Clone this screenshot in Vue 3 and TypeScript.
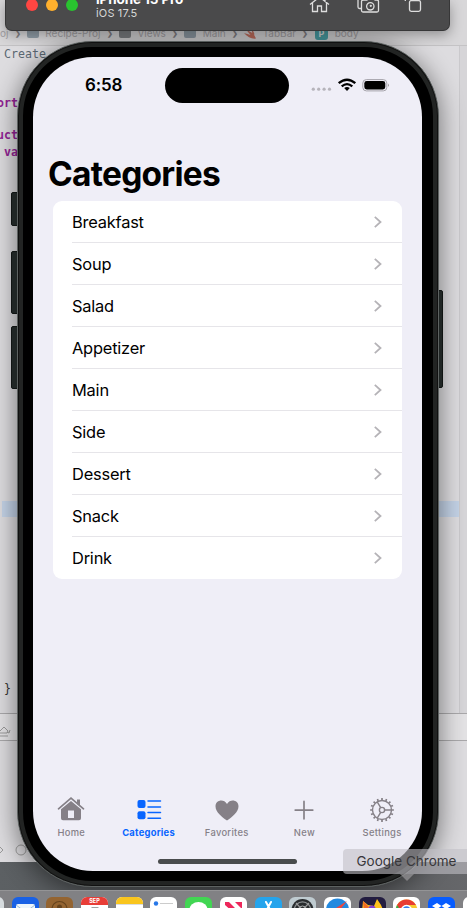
<script setup lang="ts">
const categories: string[] = ['Breakfast', 'Soup', 'Salad', 'Appetizer', 'Main', 'Side', 'Dessert', 'Snack', 'Drink']

interface Tab { label: string; icon: string; active?: boolean }
const tabs: Tab[] = [
  { label: 'Home', icon: 'home' },
  { label: 'Categories', icon: 'categories', active: true },
  { label: 'Favorites', icon: 'heart' },
  { label: 'New', icon: 'plus' },
  { label: 'Settings', icon: 'gear' },
]
const dock: string[] = ['finder', 'mail', 'contacts', 'calendar', 'notes', 'reminders', 'messages', 'news', 'appstore', 'settings', 'safari', 'firefox', 'chrome', 'dropbox', 'slack']
const teeth: number[] = Array.from({ length: 16 }, (_, i) => i * 22.5)
</script>

<template>
  <main class="desktop">
    <section class="editor">
      <div class="crumbs">
        <span>oj</span><b>❯</b><i class="folder"></i><span>Recipe-Proj</span><b>❯</b><i class="folder dark"></i><span>Views</span><b>❯</b><i class="folder"></i><span>Main</span><b>❯</b>
        <svg class="swift" width="12" height="11" viewBox="0 0 13 11"><path d="M0 5l7 2L2 1l7 4-1-4q4 3 3 6l2 4q-7 1-13-6z" fill="#c4705f" /></svg>
        <span>TabBar</span><b>❯</b><em>P</em><span>body</span>
      </div>
      <div class="code">
        <span class="comment">Create</span>
        <span class="kw port">ort</span>
        <span class="kw struct">uct</span>
        <span class="kw var">va</span>
        <span class="brace">}</span>
      </div>
      <div class="line-highlight"></div>
      <div class="debug-bar">
        <svg width="12" height="12" viewBox="0 0 12 12" fill="none" stroke="#999" stroke-width="1"><path d="M0 5l4-4 4 4-1 2H0M0 10h8M7 6l2 1 1-3" /></svg>
      </div>
      <div class="scroll-gutter"></div>
      <svg class="bottom-icons" width="30" height="16" viewBox="0 0 30 16" fill="none" stroke="#999"><path d="M0 5l3 3-3 3" /><circle cx="21" cy="8" r="5" /></svg>
    </section>
    <div class="desk-strip"></div>

    <section class="phone">
      <i class="side action"></i><i class="side up"></i><i class="side down"></i><i class="side power"></i>
      <div class="bezel">
        <div class="screen">
          <div class="status">
            <time>6:58</time>
            <div class="island"></div>
            <svg class="indicators" width="80" height="16" viewBox="0 0 80 16">
              <g fill="#b6b4bb"><circle cx="3.3" cy="11.2" r="1.6" /><circle cx="8.7" cy="11.2" r="1.6" /><circle cx="14.1" cy="11.2" r="1.6" /><circle cx="19.5" cy="11.2" r="1.6" /></g>
              <g fill="none" stroke="#000" stroke-width="2.3"><path d="M28.700 5.200q8.300-7 16.600 0M31.700 8.300q5.300-4.400 10.600 0" /></g>
              <path d="M34.200 10q2.800-2 5.600 0L37 12.900z" />
              <rect x="52.8" y="1.6" width="24" height="11.3" rx="3.5" fill="none" stroke="#a5a3aa" />
              <rect x="54.3" y="3" width="21" height="8.5" rx="2.4" /><path d="M78.200 5.500q1.600 1.600 0 3.500z" fill="#777" />
            </svg>
          </div>
          <h1>Categories</h1>
          <ul class="list">
            <li v-for="name in categories" :key="name">
              <span>{{ name }}</span>
              <svg width="9" height="12" viewBox="0 0 9 12" fill="none" stroke="#b5b3b7" stroke-width="1.8"><path d="M1.800 .9L7.500 6l-5.700 5.100" /></svg>
            </li>
          </ul>
          <nav>
            <a v-for="tab in tabs" :key="tab.label" :class="{ active: tab.active }">
              <svg v-if="tab.icon === 'home'" width="28" height="26" viewBox="0 0 28 26"><path d="M1.500 12.800L14 2.200l12.500 10.600" fill="none" stroke="currentColor" stroke-width="1.7" stroke-linecap="round" /><path d="M20 3.500h3v7l-3-2.500zM4 13.200L14 5l10 8.200v9q0 2-2 2H6q-2 0-2-2zm7 1.300V22h6v-7.500z" fill="currentColor" fill-rule="evenodd" /></svg>
              <svg v-else-if="tab.icon === 'categories'" width="28" height="26" viewBox="0 0 28 26"><g fill="currentColor"><rect x="2.5" y="4" width="8" height="8" rx="2" /><rect x="2.5" y="15.3" width="8" height="8" rx="2" /></g><path d="M13 5h12.500M13 10.900h12.500M13 16.500h12.500M13 22.300h12.500" stroke="currentColor" stroke-width="1.5" stroke-linecap="round" /></svg>
              <svg v-else-if="tab.icon === 'heart'" width="28" height="26" viewBox="0 0 28 26"><path d="M14 24.500C9 21 2.500 16 2.500 10.200c0-6.300 8.200-8.100 11.500-2.300 3.300-5.800 11.500-4 11.500 2.300C25.500 16 19 21 14 24.500z" fill="currentColor" /></svg>
              <svg v-else-if="tab.icon === 'plus'" width="28" height="26" viewBox="0 0 28 26"><path d="M14 5.400v17.400M5.200 14.100h17.600" stroke="currentColor" stroke-width="1.7" stroke-linecap="round" /></svg>
              <svg v-else width="28" height="26" viewBox="0 0 28 26" fill="none" stroke="currentColor" stroke-width="1.4"><g stroke-width="1.7"><path v-for="a in teeth" :key="a" d="M14 2.100v2" :transform="`rotate(${a} 14 14)`" /></g><circle cx="14" cy="14" r="9.5" /><circle cx="14" cy="14" r="2.6" /><path d="M16.600 14H23.500M12.700 11.700L9.200 5.900M12.700 16.300l-3.500 5.800" /></svg>
              <span>{{ tab.label }}</span>
            </a>
          </nav>
          <div class="home-indicator"></div>
        </div>
      </div>
    </section>

    <header class="sim-bar">
      <div class="lights"><i class="red"></i><i class="yellow"></i><i class="green"></i></div>
      <div class="device"><strong>iPhone 15 Pro</strong><small>iOS 17.5</small></div>
      <svg class="tools" width="120" height="14" viewBox="0 0 120 14" fill="none" stroke="#dedede" stroke-width="1.3">
        <path d="M2 4.500L11.500-3 21 4.500M4.500 3v8.500h5V6h4v5.500h5V3M17 0v2" />
        <path d="M53 8.500h-1.500q-1.500 0-1.500-1.500V-1M55.500 0h3.500l1.500-2h5l1.500 2h2q1.500 0 1.500 1.500v9q0 1.500-1.500 1.500H55q-1.500 0-1.500-1.500V1.500Q53.500 0 55.500 0z" /><circle cx="62.3" cy="6.3" r="3.7" /><circle cx="62.8" cy="5.8" r=".5" /><rect x="101.5" y=".6" width="11" height="10.7" rx="1.7" /><path d="M97.300 1v-4" />
      </svg>
    </header>

    <footer class="dock">
      <svg v-for="app in dock" :key="app" width="27" height="27" viewBox="0 0 27 27" :class="['app', app]">
        <template v-if="app === 'mail'"><rect x="4" y="7" width="19" height="13" rx="2" fill="#edf5fb" /><path d="M4 8l9.500 7L23 8" fill="none" stroke="#9dbbd7" /></template>
        <template v-else-if="app === 'contacts'"><circle cx="13.5" cy="12" r="7.5" fill="none" stroke="#65431d" stroke-width="1.2" /><circle cx="13.5" cy="10" r="2.5" fill="#65431d" /></template>
        <template v-else-if="app === 'calendar'"><rect width="27" height="8" fill="#e83d37" /><text x="13.5" y="6.4" text-anchor="middle" font-size="5.5" font-weight="700" fill="#fff">SEP</text><path d="M10.500 11.200h6l-3 8" fill="none" stroke="#444" stroke-width="1.5" /></template>
        <template v-else-if="app === 'notes'"><rect width="27" height="7" fill="#f9c51d" /><path d="M0 7.500h27" stroke="#ddd" /></template>
        <template v-else-if="app === 'reminders'"><circle cx="6" cy="6.5" r="2.2" fill="#2878e8" /><path d="M10 6.500h13" stroke="#ccc" /></template>
        <ellipse v-else-if="app === 'messages'" cx="13.5" cy="12.5" rx="9" ry="7.5" fill="#fff" />
        <path v-else-if="app === 'news'" d="M5 5h4l13 13v5L5 8zM15 5h7v7z" fill="#ed285b" />
        <path v-else-if="app === 'appstore'" d="M11 5l8 15M16 5L8 20" stroke="#fff" stroke-width="2" stroke-linecap="round" />
        <template v-else-if="app === 'settings'"><circle cx="13.5" cy="13" r="11" fill="#292c2e" /><circle cx="13.5" cy="13" r="8.2" fill="none" stroke="#8a8e90" stroke-width="1.3" /><circle cx="13.5" cy="13" r="4" fill="none" stroke="#b3b6b7" /><path d="M13.500 13L7 6M13.500 13L20 6" stroke="#999" stroke-width="1.2" /></template>
        <template v-else-if="app === 'safari'"><circle cx="13.5" cy="13" r="11.5" fill="#2389df" /><path d="M23 4l-8 10-3-3z" fill="#ef4640" /></template>
        <template v-else-if="app === 'firefox'"><path d="M3 15L4 4l5 4 6 1 3-7 4 6 3 7z" fill="#ffc21c" /><path d="M4 4l6 6-5 5z" fill="#f06a27" /><circle cx="13" cy="12" r="3.6" fill="#8740ce" /></template>
        <template v-else-if="app === 'chrome'"><circle cx="13.5" cy="13.5" r="11" fill="#f7c92d" /><path d="M4 8a11 11 0 0119 0h-9q-6 0-5 9z" fill="#e83c32" /><path d="M4 8l6 9v6Q0 18 4 8z" fill="#31a853" /><circle cx="13.5" cy="13.5" r="5" fill="#347ee8" stroke="#fff" stroke-width="1.5" /></template>
        <path v-else-if="app === 'dropbox'" d="M4 9l5-3 4.500 3L9 12zM13.500 9L18 6l5 3-5 3z" fill="#fff" />
      </svg>
    </footer>
    <aside class="tooltip">Google Chrome</aside>
  </main>
</template>

<style>
body { overflow: hidden; }
</style>
<style scoped>
* { box-sizing: border-box; }
.desktop { position: relative; width: 467px; height: 908px; overflow: hidden; background: #d6d4d7; font-family: Inter, sans-serif; }
.editor { position: absolute; left: 0; top: 0; width: 467px; height: 862px; background: #dddcdf; }
.crumbs { height: 46px; padding-top: 21px; border-bottom: 1px solid #c4c3c5; background: #d8d7d9; display: flex; gap: 6.3px; align-items: center; font-size: 10px; color: #a3a1a4; white-space: nowrap; }
.crumbs b { font-size: 7px; color: #858387; }
.folder { width: 12px; height: 9px; border-radius: 2px; background: #8f9ca6; flex: none; }
.folder.dark { background: #7f8285; }
.crumbs em { background: #4ba0a6; color: #ddd; font: bold 9px Inter; padding: 1px 4px; border-radius: 3px; }
.code { position: absolute; left: 0; top: 47px; width: 40px; height: 700px; font: 11.6px/14px "DejaVu Sans Mono", monospace; }
.code span { position: absolute; left: 0; white-space: nowrap; }
.code .comment { left: 4px; top: 0; color: #5b6873; }
.code .kw { color: #922294; font-weight: bold; }
.code .port { left: -3px; top: 49px; }
.code .struct { left: -3px; top: 81px; }
.code .var { left: 4px; top: 98px; }
.code .brace { left: 4px; top: 634px; color: #333; }
.line-highlight { position: absolute; left: 2px; top: 501px; width: 457px; height: 16px; background: #c3d2e6; }
.debug-bar { position: absolute; left: 0; top: 713px; width: 467px; height: 28px; border: solid #a9a8aa; border-width: 1px 0; background: #e3e2e4; padding-top: 8px; }
.scroll-gutter { position: absolute; left: 459px; top: 46px; width: 8px; height: 667px; background: #d6d5d8; border-left: 1px solid #cac9cc; }
.bottom-icons { position: absolute; left: 0; bottom: 4px; }
.desk-strip { position: absolute; left: 0; top: 862px; width: 467px; height: 28px; background: linear-gradient(90deg, #5c6063, #505356 60%, #66676a); }
.phone { position: absolute; left: 17px; top: 41px; width: 422px; height: 846px; border-radius: 75px; box-shadow: 0 4px 24px 1px #0007; }
.bezel { position: relative; height: 846px; border-radius: 75px; border: 1px solid #5d6261; background: #000; padding: 15px; box-shadow: inset 0 0 0 1px #111, inset 0 0 0 5px #222423; }
.side { position: absolute; left: -6px; width: 7px; background: #202625; border: 1px solid #101413; border-radius: 2px 0 0 2px; }
.action { top: 151px; height: 34px; }
.up { top: 210px; height: 63px; }
.down { top: 285px; height: 63px; }
.power { left: 420px; top: 249px; height: 98px; width: 6px; border-radius: 0 2px 2px 0; }
.screen { width: 389px; height: 814px; background: #efeef7; border-radius: 60px; display: flex; flex-direction: column; overflow: hidden; }
.status { height: 47px; padding-top: 11px; display: flex; align-items: flex-start; flex: none; }
time { width: 80px; margin-left: 52px; padding-top: 7px; font-size: 17px; line-height: 21px; font-weight: 600; letter-spacing: -.2px; }
.island { width: 124px; height: 35px; border-radius: 18px; background: #000; }
.indicators { margin: 10px 0 0 20.5px; }
h1 { margin: 51px 0 0 15px; height: 38px; font-size: 33.5px; line-height: 38px; font-weight: 700; letter-spacing: -.75px; }
.list { margin: 8px 20px 0; padding: 0; list-style: none; background: #fff; border-radius: 9px; height: 378px; display: grid; grid-template-rows: repeat(9, 42px); flex: none; }
li { margin-left: 19px; padding-right: 20px; display: flex; align-items: center; justify-content: space-between; font-size: 16.4px; letter-spacing: -.2px; border-bottom: 1px solid #e6e5e9; }
li:last-child { border-bottom: 0; }
nav { margin: 217px 0 0 -.5px; display: grid; grid-template-columns: repeat(5, 77.7px); height: 44px; flex: none; }
nav a { display: flex; flex-direction: column; align-items: center; color: #858087; font-size: 9.4px; line-height: 12px; font-weight: 500; letter-spacing: .3px; gap: 5px; }
nav a span { height: 12px; }
nav .active { color: #0865ff; font-weight: 700; letter-spacing: .25px; }
nav .active svg { margin-left: -1px; }
nav .active span { margin-left: -1px; }
.home-indicator { width: 139px; height: 5px; margin: 19px auto 0; border-radius: 3px; background: #494c4d; }
.sim-bar { position: absolute; left: 5px; top: 0; width: 444.5px; height: 31px; background: #4a4a4b; border-radius: 0 0 7px 7px; border: 1px solid #373738; border-top: 0; display: flex; box-shadow: 0 4px 13px #0005; }
.lights { display: flex; gap: 8px; margin-left: 19.5px; margin-top: -1px; height: 12px; width: 51.5px; }
.lights i { width: 12px; height: 12px; flex: none; border-radius: 50%; }
.red { background: #ff4642; } .yellow { background: #ffb02d; } .green { background: #29c32f; }
.device { margin-left: 19px; width: 208px; margin-top: -8px; color: #d7d7d7; line-height: 13px; }
.device strong, .device small { display: block; }
.device strong { height: 15px; color: #fff; font-size: 13.5px; line-height: 15px; letter-spacing: -.1px; }
.device small { font-size: 11px; line-height: 13px; letter-spacing: .15px; }
.tools { margin-left: 3.5px; overflow: visible; }
.dock { position: absolute; left: 0; top: 890px; width: 467px; height: 18px; background: #818184; border-top: 1px solid #949496; padding-top: 6px; overflow: hidden; display: flex; gap: 7.7px; }
.app { flex: none; border-radius: 6px; background: #fff; }
.finder { margin-left: -23px; background: #d7dcdf; }
.mail { background: #1961e5; } .contacts { background: #946431; }
.messages { background: #42d653; } .appstore { background: #25a4ec; }
.app.settings { background: #bfcbd0; } .firefox { background: #221c40; } .dropbox { background: #075cff; }
.tooltip { position: absolute; left: 343px; top: 849px; width: 127px; height: 25px; padding-left: 13.5px; line-height: 25px; color: #38373a; font-size: 13.5px; white-space: nowrap; background: #c2c0c699; border-radius: 4px; }
.tooltip::after { content: ''; position: absolute; left: 57px; top: 25px; border: 7px solid transparent; border-top-color: #a6a5a999; border-bottom: 0; }
</style>
